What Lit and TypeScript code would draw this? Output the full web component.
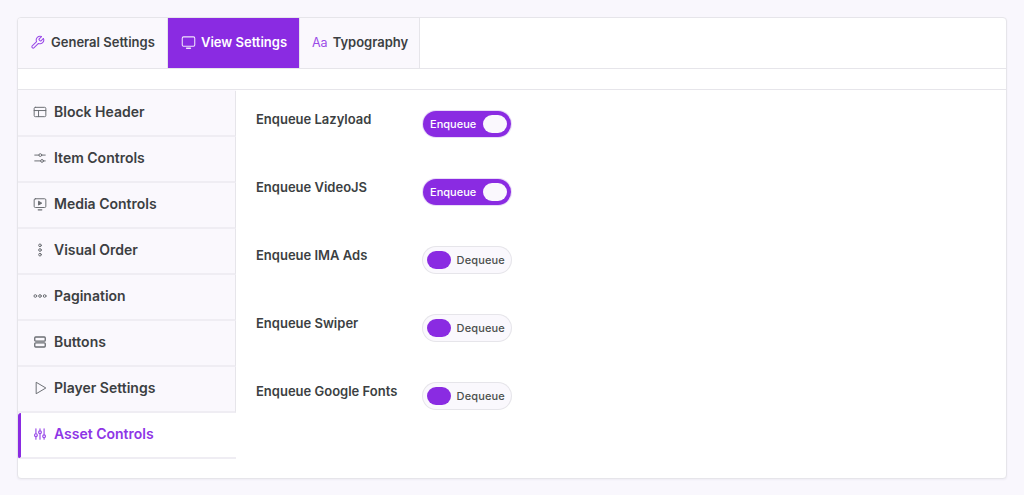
import { LitElement, html, css, svg } from "lit";
import { customElement } from "lit/decorators.js";

const icon = (body: unknown, size = 14) => html`<svg
  width=${size}
  height=${size}
  viewBox="0 0 24 24"
  fill="none"
  stroke="currentColor"
  stroke-width="1.7"
  stroke-linecap="round"
  stroke-linejoin="round"
>
  ${body}
</svg>`;

const wrench = svg`<path d="M14.7 6.3a1 1 0 0 0 0 1.4l1.6 1.6a1 1 0 0 0 1.4 0l3.77-3.77a6 6 0 0 1-7.94 7.94l-6.91 6.91a2.12 2.12 0 0 1-3-3l6.91-6.91a6 6 0 0 1 7.94-7.94l-3.76 3.76z"/>`;
const monitor = svg`<rect x="2" y="3" width="20" height="15" rx="2"/><path d="M9 21h6" stroke-width="2.4"/>`;
const layout = svg`<rect x="2" y="4" width="20" height="16" rx="2"/><path d="M2 9.5h20M9.5 9.5V20"/>`;
const sliders = svg`<path d="M3 7h7M15 7h6M3 17h10M18 17h3"/><circle cx="12.5" cy="7" r="2.4"/><circle cx="15.5" cy="17" r="2.4"/>`;
const media = svg`<rect x="2" y="3" width="20" height="15" rx="2"/><path d="M9 22h6" stroke-width="2.2"/><path d="M10 7.5l5 3-5 3z" fill="currentColor"/>`;
const vdots = svg`<circle cx="12" cy="4" r="2.3"/><circle cx="12" cy="12" r="2.3"/><circle cx="12" cy="20" r="2.3"/>`;
const hdots = svg`<circle cx="4" cy="12" r="2.3"/><circle cx="12" cy="12" r="2.3"/><circle cx="20" cy="12" r="2.3"/>`;
const rows = svg`<rect x="3" y="3.5" width="18" height="7" rx="1.5" stroke-width="2.3"/><rect x="3" y="13.5" width="18" height="7" rx="1.5" stroke-width="2.3"/>`;
const play = svg`<path d="M6 2.5l16 9.5-16 9.5z"/>`;
const tune = svg`<path d="M5 3v8M5 17v4M12 3v3M12 12v9M19 3v10M19 19v2" stroke-width="2"/><circle cx="5" cy="14" r="2.4" stroke-width="2"/><circle cx="12" cy="9" r="2.4" stroke-width="2"/><circle cx="19" cy="16" r="2.4" stroke-width="2"/>`;

const menu = [
  { label: "Block Header", icon: layout },
  { label: "Item Controls", icon: sliders },
  { label: "Media Controls", icon: media },
  { label: "Visual Order", icon: vdots },
  { label: "Pagination", icon: hdots },
  { label: "Buttons", icon: rows },
  { label: "Player Settings", icon: play },
  { label: "Asset Controls", icon: tune, active: true },
];

const assets = [
  { label: "Enqueue Lazyload", on: true },
  { label: "Enqueue VideoJS", on: true },
  { label: "Enqueue IMA Ads", on: false },
  { label: "Enqueue Swiper", on: false },
  { label: "Enqueue Google Fonts", on: false },
];

@customElement("app-root")
export class AppRoot extends LitElement {
  static styles = css`
    :host {
      display: block;
      height: 495px;
      box-sizing: border-box;
      padding: 17px 17px 16px;
      background: #f9f7fd;
      font-family: Inter, "Liberation Sans", sans-serif;
      color: #3c3f42;
    }
    .card {
      height: 462px;
      box-sizing: border-box;
      background: #fff;
      border: 1px solid #e6e5ea;
      border-radius: 4px;
      box-shadow: 0 1px 2px rgba(40, 30, 70, 0.05);
      overflow: hidden;
    }
    .tabs {
      display: flex;
      height: 51px;
      box-sizing: border-box;
      border-bottom: 1px solid #e6e5ea;
    }
    .tab {
      display: flex;
      align-items: center;
      box-sizing: border-box;
      padding-bottom: 2px;
      background: #faf8fd;
      border-right: 1px solid #e6e5ea;
      font-size: 13px;
      font-weight: 600;
    }
    .tab svg {
      color: #9a4be8;
      margin-right: 6px;
    }
    .tab.general {
      width: 150px;
      padding-left: 12px;
    }
    .tab.view {
      width: 132px;
      padding-left: 13px;
      background: #8a2be2;
      color: #fff;
    }
    .tab.view svg {
      color: #f0e4fb;
      margin-right: 5px;
    }
    .tab.typo {
      width: 120px;
      padding-left: 12px;
    }
    .aa {
      color: #9a4be8;
      font-size: 12.5px;
      font-weight: 400;
      margin-right: 5px;
    }
    .body {
      display: flex;
      height: 388px;
      margin-top: 20px;
      border-top: 1px solid #e6e5ea;
    }
    .side {
      width: 218px;
      flex: none;
      box-sizing: border-box;
      padding-top: 1px;
      background: linear-gradient(#faf8fd 1px, transparent 1px);
    }
    .item {
      display: flex;
      align-items: center;
      gap: 7px;
      height: 46px;
      box-sizing: border-box;
      padding: 0 0 4px 15px;
      background: #faf8fd;
      border-bottom: 2px solid #efedf3;
      border-right: 1px solid #e6e5ea;
      font-size: 14px;
      font-weight: 600;
    }
    .item svg {
      color: #6b6e73;
      flex: none;
      margin-top: 2px;
    }
    .item.active {
      background: #fff;
      color: #8e35e6;
      border-left: 3px solid #8a2be2;
      border-right: none;
      padding-left: 12px;
      border-radius: 3px 0 0 3px;
    }
    .item.active svg {
      color: #9a4be8;
    }
    .main {
      flex: 1;
      display: flex;
      flex-direction: column;
      gap: 42px;
      padding: 21px 0 0 20px;
    }
    .row {
      display: flex;
      align-items: flex-start;
      height: 26px;
    }
    .label {
      width: 167px;
      font-size: 13px;
      font-weight: 600;
      line-height: 16px;
    }
    .toggle {
      display: flex;
      align-items: center;
      justify-content: space-between;
      width: 88px;
      height: 26px;
      box-sizing: border-box;
      border-radius: 13px;
      font-size: 11px;
      font-weight: 500;
    }
    .toggle.on {
      padding: 0 4px 0 7px;
      background: #8a2be2;
      color: #fff;
      box-shadow: 0 0 0 1px #e9dcf8;
    }
    .toggle.off {
      flex-direction: row-reverse;
      padding: 0 6px 0 4px;
      background: #faf8fd;
      box-shadow: 0 0 0 1px #e6e5ea;
      color: #4b4f4d;
      letter-spacing: 0.15px;
    }
    .knob {
      width: 24px;
      height: 18px;
      border-radius: 9px;
      background: #faf8fd;
    }
    .off .knob {
      background: #8a2be2;
    }
  `;

  render() {
    return html`<div class="card">
      <div class="tabs">
        <div class="tab general">${icon(wrench, 15)}General Settings</div>
        <div class="tab view">${icon(monitor, 15)}View Settings</div>
        <div class="tab typo"><span class="aa">Aa</span>Typography</div>
      </div>
      <div class="body">
        <div class="side">
          ${menu.map(
            (m) => html`<div class="item ${m.active ? "active" : ""}">
              ${icon(m.icon)}<span>${m.label}</span>
            </div>`
          )}
        </div>
        <div class="main">
          ${assets.map(
            (a) => html`<div class="row">
              <div class="label">${a.label}</div>
              <div class="toggle ${a.on ? "on" : "off"}">
                <span>${a.on ? "Enqueue" : "Dequeue"}</span>
                <span class="knob"></span>
              </div>
            </div>`
          )}
        </div>
      </div>
    </div>`;
  }
}
